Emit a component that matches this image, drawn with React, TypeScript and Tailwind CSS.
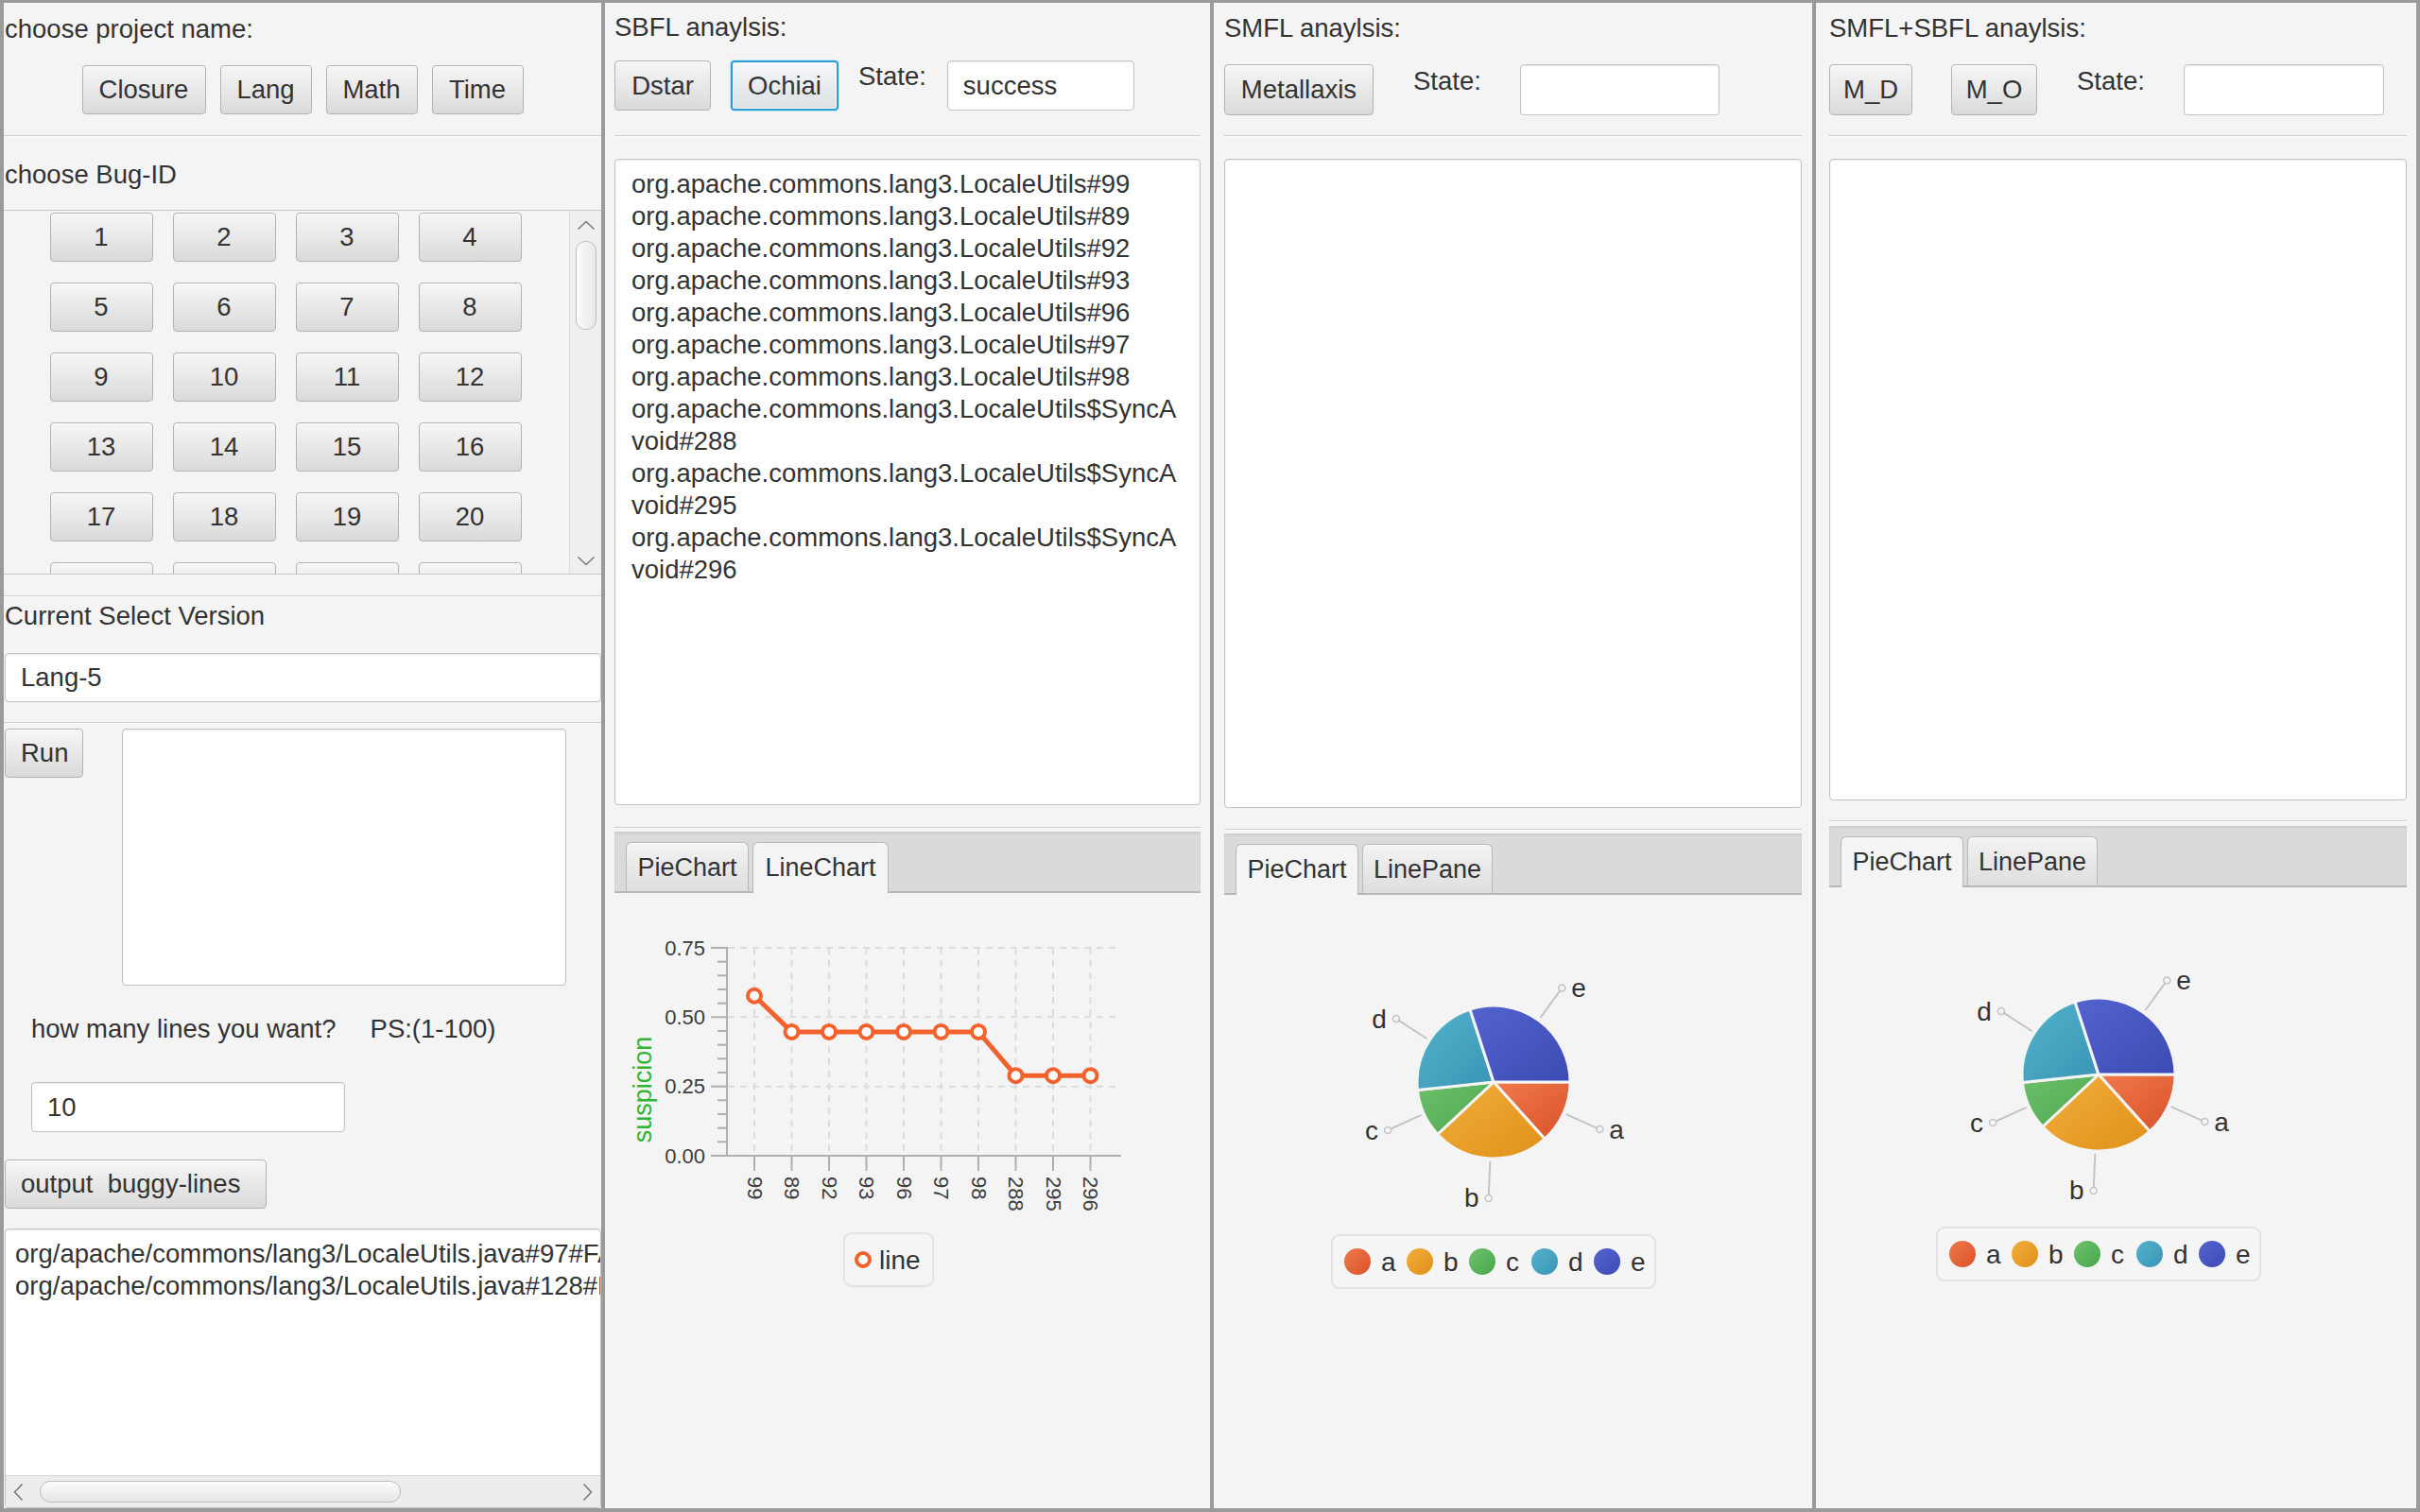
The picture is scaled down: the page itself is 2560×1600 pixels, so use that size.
import React from 'react';

/** Shared JavaFX-like (Modena) control looks */
const btn =
	'flex shrink-0 items-center justify-center rounded-[4px] border border-[#b3b3b3] bg-linear-to-b from-[#f6f6f6] to-[#dadada] text-[#333] shadow-[inset_0_1px_0_rgba(255,255,255,0.9)]';
const btnFocused =
	'flex shrink-0 items-center justify-center rounded-[4px] border-2 border-[#2a9fd8] bg-linear-to-b from-[#f6f8fa] to-[#dde1e4] text-[#333] shadow-[0_0_0_1px_#c3e4f4,inset_0_0_0_1px_#ffffff]';
const field = 'shrink-0 rounded-[4px] border border-[#c2c2c2] bg-white shadow-[inset_0_1px_2px_rgba(0,0,0,0.08)]';
const separator = 'h-[2px] shrink-0 border-t border-[#cfcfcf] bg-[#fafafa]';

const bugIds = Array.from({ length: 24 }, (_, i) => i + 1);

const sbflLines = [
	'org.apache.commons.lang3.LocaleUtils#99',
	'org.apache.commons.lang3.LocaleUtils#89',
	'org.apache.commons.lang3.LocaleUtils#92',
	'org.apache.commons.lang3.LocaleUtils#93',
	'org.apache.commons.lang3.LocaleUtils#96',
	'org.apache.commons.lang3.LocaleUtils#97',
	'org.apache.commons.lang3.LocaleUtils#98',
	'org.apache.commons.lang3.LocaleUtils$SyncA',
	'void#288',
	'org.apache.commons.lang3.LocaleUtils$SyncA',
	'void#295',
	'org.apache.commons.lang3.LocaleUtils$SyncA',
	'void#296',
];

const slices = [
	{ name: 'a', from: 0, to: 48, light: '#f07a4b', dark: '#d9522a' },
	{ name: 'b', from: 48, to: 137, light: '#f2ae3c', dark: '#e0911a' },
	{ name: 'c', from: 137, to: 174, light: '#6dc26d', dark: '#4ca64c' },
	{ name: 'd', from: 174, to: 252, light: '#55b3cf', dark: '#3995b3' },
	{ name: 'e', from: 252, to: 360, light: '#5464cf', dark: '#3c4bb3' },
];

function Tabs({ tabs, selected }: { tabs: { label: string; w: number }[]; selected: number }) {
	return (
		<div className="flex h-[65px] shrink-0 items-end gap-[4px] border-b-2 border-[#b8b8b8] bg-[#dadada] pl-[12px] shadow-[inset_0_2px_3px_rgba(0,0,0,0.07)]">
			{tabs.map((t, i) =>
				i === selected ? (
					<div
						key={t.label}
						style={{ width: t.w }}
						className="-mb-[2px] flex h-[54px] items-center justify-center rounded-t-[6px] border border-b-0 border-[#b8b8b8] bg-[#f4f4f4] pb-[2px] text-[27px]"
					>
						{t.label}
					</div>
				) : (
					<div
						key={t.label}
						style={{ width: t.w }}
						className="flex h-[52px] items-center justify-center rounded-t-[6px] border border-b-0 border-[#b8b8b8] bg-linear-to-b from-[#f3f3f3] to-[#dedede] text-[27px] shadow-[inset_0_1px_0_#ffffff]"
					>
						{t.label}
					</div>
				)
			)}
		</div>
	);
}

function slicePath(cx: number, cy: number, r: number, a0: number, a1: number) {
	const rad = (d: number) => (d * Math.PI) / 180;
	const x0 = cx + r * Math.cos(rad(a0));
	const y0 = cy + r * Math.sin(rad(a0));
	const x1 = cx + r * Math.cos(rad(a1));
	const y1 = cy + r * Math.sin(rad(a1));
	const large = a1 - a0 > 180 ? 1 : 0;
	return `M${cx},${cy} L${x0},${y0} A${r},${r} 0 ${large} 1 ${x1},${y1} Z`;
}

/** Pie chart with leader labels and legend; local coords, pie centre at (285,198) */
function PieChart({ id }: { id: string }) {
	const cx = 285;
	const cy = 198;
	const r = 81;
	return (
		<svg width={611} height={440} viewBox="0 0 611 440" className="block shrink-0">
			<defs>
				{slices.map((s) => (
					<linearGradient key={s.name} id={`${id}-${s.name}`} x1="0" y1="0" x2="1" y2="1">
						<stop offset="0%" stopColor={s.light} />
						<stop offset="100%" stopColor={s.dark} />
					</linearGradient>
				))}
			</defs>
			{slices.map((s) => (
				<path
					key={s.name}
					d={slicePath(cx, cy, r, s.from, s.to)}
					fill={`url(#${id}-${s.name})`}
					stroke="#f4f4f4"
					strokeWidth={3}
					strokeLinejoin="round"
				/>
			))}
			{slices.map((s) => {
				const mid = (((s.from + s.to) / 2) * Math.PI) / 180;
				const c = Math.cos(mid);
				const sn = Math.sin(mid);
				const px = cx + 123 * c;
				const py = cy + 123 * sn;
				const right = c > 0;
				return (
					<g key={s.name}>
						<line x1={cx + 84 * c} y1={cy + 84 * sn} x2={px - 3 * c} y2={py - 3 * sn} stroke="#c4c4c4" strokeWidth={2} />
						<circle cx={px} cy={py} r={3.5} fill="none" stroke="#c4c4c4" strokeWidth={1.5} />
						<text
							x={right ? px + 10 : px - 10}
							y={py}
							dominantBaseline="central"
							textAnchor={right ? 'start' : 'end'}
							fontSize={28}
							fill="#333"
						>
							{s.name}
						</text>
					</g>
				);
			})}
			<rect x={114} y={360} width={342} height={56} rx={8} fill="#f5f5f5" stroke="#e2e2e2" strokeWidth={2} />
			{slices.map((s, i) => (
				<g key={s.name}>
					<circle cx={141 + 66 * i} cy={388} r={14} fill={`url(#${id}-${s.name})`} />
					<text x={166 + 66 * i} y={388} dominantBaseline="central" fontSize={28} fill="#333">
						{s.name}
					</text>
				</g>
			))}
		</svg>
	);
}

/** Line chart of suspicion values, drawn in page coordinates of the column */
function LineChart() {
	const xs = [798, 837.5, 877, 916.5, 956, 995.5, 1035, 1074.5, 1114, 1153.5];
	const labels = ['99', '89', '92', '93', '96', '97', '98', '288', '295', '296'];
	const vals = [0.577, 0.447, 0.447, 0.447, 0.447, 0.447, 0.447, 0.289, 0.289, 0.289];
	const y = (v: number) => 1223 - v * 293.33;
	const minor = Array.from({ length: 14 }, (_, i) => i + 1).filter((i) => i % 5 !== 0);
	const points = xs.map((x, i) => `${x},${y(vals[i])}`).join(' ');
	return (
		<svg width={620} height={440} viewBox="650 945 620 440" className="block shrink-0">
			{[0.25, 0.5, 0.75].map((v) => (
				<line key={v} x1={770} x2={1185} y1={y(v)} y2={y(v)} stroke="#dcdcdc" strokeWidth={2} strokeDasharray="7 6" />
			))}
			{xs.map((x) => (
				<line key={x} x1={x} x2={x} y1={1003} y2={1222} stroke="#dcdcdc" strokeWidth={2} strokeDasharray="7 6" />
			))}
			<line x1={769} x2={769} y1={1002} y2={1224} stroke="#b0b0b0" strokeWidth={2} />
			<line x1={752} x2={1186} y1={1223} y2={1223} stroke="#b0b0b0" strokeWidth={2} />
			{[0, 0.25, 0.5, 0.75].map((v) => (
				<g key={v}>
					<line x1={752} x2={769} y1={y(v)} y2={y(v)} stroke="#b0b0b0" strokeWidth={2} />
					<text x={746} y={y(v)} textAnchor="end" dominantBaseline="central" fontSize={22} fill="#3d3d3d">
						{v.toFixed(2)}
					</text>
				</g>
			))}
			{minor.map((i) => (
				<line key={i} x1={759} x2={769} y1={y(i * 0.05)} y2={y(i * 0.05)} stroke="#b0b0b0" strokeWidth={2} />
			))}
			{xs.map((x, i) => (
				<g key={labels[i]}>
					<line x1={x} x2={x} y1={1223} y2={1239} stroke="#b0b0b0" strokeWidth={2} />
					<text
						transform={`translate(${x} 1245) rotate(90)`}
						dominantBaseline="central"
						fontSize={22}
						fill="#3d3d3d"
					>
						{labels[i]}
					</text>
				</g>
			))}
			<text
				transform="translate(680 1153) rotate(-90)"
				textAnchor="middle"
				dominantBaseline="central"
				fontSize={27}
				fill="#2fb52f"
			>
				suspicion
			</text>
			<polyline points={points} fill="none" stroke="#f3622d" strokeWidth={5} strokeLinejoin="round" />
			{xs.map((x, i) => (
				<circle key={x} cx={x} cy={y(vals[i])} r={7} fill="#ffffff" stroke="#f3622d" strokeWidth={4} />
			))}
			<rect x={893} y={1305} width={94} height={56} rx={8} fill="#f5f5f5" stroke="#e2e2e2" strokeWidth={2} />
			<circle cx={913} cy={1333} r={7} fill="#ffffff" stroke="#f3622d" strokeWidth={4} />
			<text x={930} y={1333} dominantBaseline="central" fontSize={28} fill="#333">
				line
			</text>
		</svg>
	);
}

function ChevronUp() {
	return (
		<svg width={20} height={11} viewBox="0 0 20 11" className="block">
			<path d="M1.5 9.5 L10 1.5 L18.5 9.5" fill="none" stroke="#7a7a7a" strokeWidth={1.6} />
		</svg>
	);
}

function ChevronDown() {
	return (
		<svg width={20} height={11} viewBox="0 0 20 11" className="block">
			<path d="M1.5 1.5 L10 9.5 L18.5 1.5" fill="none" stroke="#7a7a7a" strokeWidth={1.6} />
		</svg>
	);
}

function ChevronSide({ dir }: { dir: 'left' | 'right' }) {
	return (
		<svg width={11} height={20} viewBox="0 0 11 20" className="block">
			<path
				d={dir === 'left' ? 'M9.5 1.5 L1.5 10 L9.5 18.5' : 'M1.5 1.5 L9.5 10 L1.5 18.5'}
				fill="none"
				stroke="#7a7a7a"
				strokeWidth={1.6}
			/>
		</svg>
	);
}

export default function App() {
	return (
		<div className="flex h-[1600px] w-[2560px] gap-[4px] overflow-hidden bg-[#9a9a9a] px-[4px] pt-[3px] pb-[4px] font-['Liberation_Sans',Arial,sans-serif] text-[27.5px] leading-[34px] text-[#333]">
			{/* Column 1: project / bug selection */}
			<div className="flex w-[632px] shrink-0 flex-col bg-[#f4f4f4]">
				<div className="pt-[11px] pl-px">choose project name:</div>
				<div className="mt-[21px] flex h-[52px] shrink-0 justify-center gap-[15px]">
					<div className={`${btn} w-[131px]`}>Closure</div>
					<div className={`${btn} w-[97px]`}>Lang</div>
					<div className={`${btn} w-[97px]`}>Math</div>
					<div className={`${btn} w-[97px]`}>Time</div>
				</div>
				<div className={`mt-[22px] ${separator}`} />
				<div className="mt-[23px] pl-px">choose Bug-ID</div>

				{/* Bug-ID scroll pane; the last row is scrolled out of view */}
				<div className="mt-[20px] flex h-[386px] shrink-0 border-y border-[#c8c8c8]">
					<div className="flex-1 overflow-hidden pt-[2px]">
						<div className="grid grid-cols-[repeat(4,109px)] justify-center gap-x-[21px] gap-y-[22px] pr-[2px]">
							{bugIds.map((n) => (
								<div key={n} className={`${btn} h-[52px]`}>
									{n <= 20 ? n : ''}
								</div>
							))}
						</div>
					</div>
					<div className="flex w-[34px] shrink-0 flex-col items-center border-l border-[#dcdcdc] bg-[#efefef] pt-[10px] pb-[8px]">
						<ChevronUp />
						<div className="mt-[11px] h-[94px] w-[22px] rounded-[10px] border border-[#bdbdbd] bg-linear-to-r from-[#fbfbfb] to-[#e8e8e8]" />
						<div className="flex-1" />
						<ChevronDown />
					</div>
				</div>

				<div className={`mt-[22px] ${separator}`} />
				<div className="mt-[3px] pl-px">Current Select Version</div>
				<div className={`${field} mt-[22px] ml-px flex h-[52px] items-center pl-[16px]`}>Lang-5</div>
				<div className={`mt-[21px] ${separator}`} />

				<div className="mt-[5px] flex shrink-0 items-start">
					<div className={`${btn} ml-px h-[52px] w-[83px] justify-start pl-[16px]`}>Run</div>
					<div className={`${field} ml-[41px] h-[272px] w-[470px]`} />
				</div>

				<div className="mt-[29px] flex pl-[29px]">
					<span>how many lines you want?</span>
					<span className="ml-[36px]">PS:(1-100)</span>
				</div>
				<div className={`${field} mt-[39px] ml-[29px] flex h-[53px] w-[332px] items-center pl-[16px]`}>10</div>
				<div className={`${btn} mt-[29px] ml-px h-[52px] w-[277px] justify-start whitespace-pre pl-[16px]`}>
					output  buggy-lines
				</div>

				{/* Buggy lines output */}
				<div className={`${field} mt-[21px] ml-px flex min-h-0 flex-1 flex-col overflow-hidden`}>
					<div className="flex-1 overflow-hidden whitespace-nowrap pt-[9px] pl-[10px]">
						<div>org/apache/commons/lang3/LocaleUtils.java#97#FAULT_OF_OMISSION</div>
						<div>org/apache/commons/lang3/LocaleUtils.java#128#FAULT_OF_OMISSION</div>
					</div>
					<div className="flex h-[34px] shrink-0 items-center border-t border-[#d6d6d6] bg-[#ededed] px-[8px]">
						<ChevronSide dir="left" />
						<div className="ml-[17px] h-[23px] w-[382px] rounded-[11px] border border-[#bdbdbd] bg-linear-to-b from-[#fbfbfb] to-[#e6e6e6]" />
						<div className="flex-1" />
						<ChevronSide dir="right" />
					</div>
				</div>
			</div>

			{/* Column 2: SBFL */}
			<div className="flex w-[640px] shrink-0 flex-col bg-[#f4f4f4] px-[10px]">
				<div className="pt-[9px]">SBFL anaylsis:</div>
				<div className="mt-[18px] flex h-[53px] shrink-0 items-start">
					<div className={`${btn} h-[53px] w-[102px]`}>Dstar</div>
					<div className={`${btnFocused} ml-[21px] h-[53px] w-[114px]`}>Ochiai</div>
					<div className="ml-[21px]">State:</div>
					<div className={`${field} ml-[22px] flex h-[53px] w-[198px] items-center pl-[16px]`}>success</div>
				</div>
				<div className={`mt-[26px] ${separator}`} />
				<div className={`${field} mt-[23px] h-[684px] overflow-hidden pt-[9px] pl-[17px] leading-[34px]`}>
					{sbflLines.map((l, i) => (
						<div key={i} className="whitespace-nowrap">
							{l}
						</div>
					))}
				</div>
				<div className={`mt-[23px] ${separator}`} />
				<div className="mt-[3px]">
					<Tabs
						tabs={[
							{ label: 'PieChart', w: 130 },
							{ label: 'LineChart', w: 144 },
						]}
						selected={1}
					/>
				</div>
				<LineChart />
			</div>

			{/* Column 3: SMFL */}
			<div className="flex w-[633px] shrink-0 flex-col bg-[#f4f4f4] px-[11px]">
				<div className="pt-[10px]">SMFL anaylsis:</div>
				<div className="mt-[21px] flex h-[54px] shrink-0 items-start">
					<div className={`${btn} h-[54px] w-[158px]`}>Metallaxis</div>
					<div className="mt-px ml-[42px]">State:</div>
					<div className={`${field} ml-[41px] h-[54px] w-[211px]`} />
				</div>
				<div className={`mt-[21px] ${separator}`} />
				<div className={`${field} mt-[23px] h-[687px]`} />
				<div className={`mt-[22px] ${separator}`} />
				<div className="mt-[3px]">
					<Tabs
						tabs={[
							{ label: 'PieChart', w: 130 },
							{ label: 'LinePane', w: 138 },
						]}
						selected={0}
					/>
				</div>
				<PieChart id="smfl" />
			</div>

			{/* Column 4: SMFL+SBFL */}
			<div className="flex w-[635px] shrink-0 flex-col bg-[#f4f4f4] pr-[10px] pl-[14px]">
				<div className="pt-[10px]">SMFL+SBFL anaylsis:</div>
				<div className="mt-[21px] flex h-[54px] shrink-0 items-start">
					<div className={`${btn} h-[54px] w-[88px]`}>M_D</div>
					<div className={`${btn} ml-[41px] h-[54px] w-[91px]`}>M_O</div>
					<div className="mt-px ml-[42px]">State:</div>
					<div className={`${field} ml-[41px] h-[54px] w-[212px]`} />
				</div>
				<div className={`mt-[21px] ${separator}`} />
				<div className={`${field} mt-[23px] h-[679px]`} />
				<div className={`mt-[21px] ${separator}`} />
				<div className="mt-[4px]">
					<Tabs
						tabs={[
							{ label: 'PieChart', w: 130 },
							{ label: 'LinePane', w: 138 },
						]}
						selected={0}
					/>
				</div>
				<PieChart id="mix" />
			</div>
		</div>
	);
}
